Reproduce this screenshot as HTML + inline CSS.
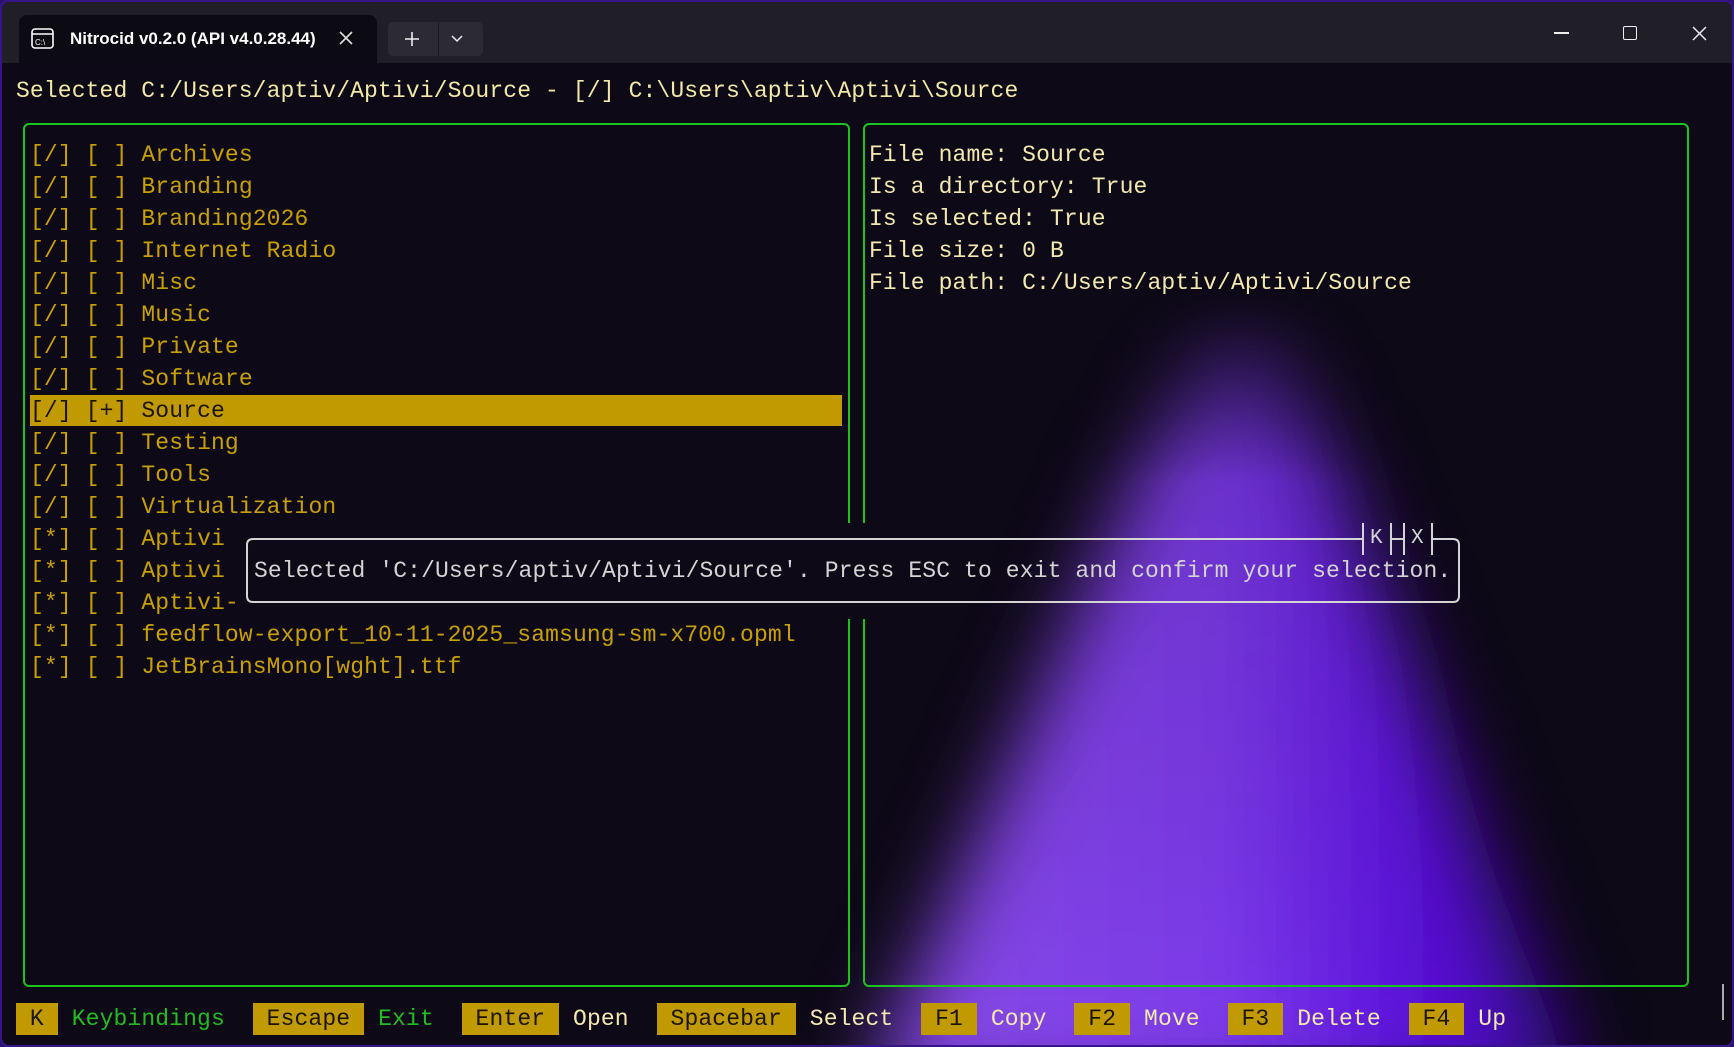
<!DOCTYPE html>
<html><head><meta charset="utf-8"><style>
*{margin:0;padding:0;box-sizing:border-box}
html,body{width:1734px;height:1047px;overflow:hidden;background:#2a1470}
#win{position:absolute;left:0;top:0;width:1734px;height:1047px;border-radius:9px;background:#0d0916;border:2px solid #35158a;overflow:hidden}
#tb{position:absolute;left:0;top:0;width:1734px;height:61px;background:#201e26}
.m{font-family:"Liberation Mono","DejaVu Sans Mono",monospace;font-size:23px;line-height:32px;white-space:pre;position:absolute;letter-spacing:0.12px}
.gold{color:#c8a000}
.pale{color:#f3e9b0}
.box{position:absolute;border:2px solid #1ec21e;border-radius:6px}
.k{background:#c09a00;color:#1a1400;display:inline-block;height:32px;line-height:32px}
.g{color:#22bb22}
</style></head><body>
<div id="win">
<svg style="position:absolute;left:0;top:0" width="1734" height="1047">
<defs>
<filter id="b" x="-50%" y="-50%" width="200%" height="200%"><feGaussianBlur stdDeviation="40"/></filter>
<linearGradient id="lg" x1="0" y1="0" x2="1" y2="0">
<stop offset="0" stop-color="#8a4de8"/><stop offset="0.5" stop-color="#7f3cee"/><stop offset="0.75" stop-color="#5e12e0"/><stop offset="1" stop-color="#3a0aa0"/></linearGradient>
<linearGradient id="vg" x1="0" y1="0" x2="0" y2="1"><stop offset="0" stop-color="#fff" stop-opacity="0"/><stop offset="0.25" stop-color="#fff" stop-opacity="0.85"/><stop offset="1" stop-color="#fff" stop-opacity="1"/></linearGradient>
<mask id="mk"><rect x="0" y="280" width="1734" height="800" fill="url(#vg)"/></mask>
</defs>
<g mask="url(#mk)"><polygon points="1215,290 1265,290 1580,1100 860,1100" fill="url(#lg)" filter="url(#b)"/></g>
</svg>
<div id="tb"></div>
<div style="position:absolute;left:17px;top:13px;width:358px;height:48px;background:#0c0a12;border-radius:8px 8px 0 0"></div>
<svg style="position:absolute;left:29px;top:26px" width="24" height="22"><rect x="1" y="1" width="21" height="19" rx="3" fill="none" stroke="#fff" stroke-width="1.6"/><line x1="1" y1="6" x2="22" y2="6" stroke="#fff" stroke-width="1.4"/><text x="4" y="17" font-family="Liberation Sans" font-size="8" fill="#fff">C:\</text></svg>
<div style="position:absolute;left:68px;top:27px;width:248px;overflow:hidden;white-space:nowrap;font:bold 17px 'Liberation Sans',sans-serif;color:#fff">Nitrocid v0.2.0 (API v4.0.28.44)</div>
<svg style="position:absolute;left:337px;top:29px" width="14" height="14"><path d="M1 1L13 13M13 1L1 13" stroke="#ddd" stroke-width="1.6"/></svg>
<div style="position:absolute;left:386px;top:20px;width:95px;height:34px;background:#2c2a33;border-radius:5px"></div>
<div style="position:absolute;left:436px;top:20px;width:1px;height:34px;background:#1a1820"></div>
<svg style="position:absolute;left:402px;top:29px" width="16" height="16"><path d="M8 1V15M1 8H15" stroke="#eee" stroke-width="1.6"/></svg>
<svg style="position:absolute;left:449px;top:33px" width="12" height="8"><path d="M1 1L6 6L11 1" stroke="#eee" stroke-width="1.5" fill="none"/></svg>
<div style="position:absolute;left:1552px;top:30px;width:15px;height:1.5px;background:#eee"></div>
<div style="position:absolute;left:1621px;top:24px;width:14px;height:14px;border:1.5px solid #eee;border-radius:2px"></div>
<svg style="position:absolute;left:1690px;top:24px" width="15" height="15"><path d="M1 1L14 14M14 1L1 14" stroke="#eee" stroke-width="1.5"/></svg>

<div class="m" style="left:14px;top:73px;color:#f2e8a8">Selected C:/Users/aptiv/Aptivi/Source - [/] C:\Users\aptiv\Aptivi\Source</div>

<div class="box" style="left:21px;top:121px;width:827px;height:864px"></div>
<div class="box" style="left:861px;top:121px;width:826px;height:864px"></div>
<div style="position:absolute;left:838px;top:521px;width:34px;height:96px;background:#0d0916"></div>

<div style="position:absolute;left:28px;top:393px;width:812px;height:31px;background:#c09a00"></div>
<div class="m gold" style="left:28px;top:137px">[/] [ ] Archives
[/] [ ] Branding
[/] [ ] Branding2026
[/] [ ] Internet Radio
[/] [ ] Misc
[/] [ ] Music
[/] [ ] Private
[/] [ ] Software
<span style="color:#1a1400">[/] [+] Source</span>
[/] [ ] Testing
[/] [ ] Tools
[/] [ ] Virtualization
[*] [ ] Aptivi
[*] [ ] Aptivi
[*] [ ] Aptivi-
[*] [ ] feedflow-export_10-11-2025_samsung-sm-x700.opml
[*] [ ] JetBrainsMono[wght].ttf</div>

<div class="m pale" style="left:867px;top:137px">File name: Source
Is a directory: True
Is selected: True
File size: 0 B
File path: C:/Users/aptiv/Aptivi/Source</div>

<svg style="position:absolute;left:0;top:0" width="1734" height="1047">
<g stroke="#d4d4d4" stroke-width="2" fill="none">
<path d="M1361 537H251Q245 537 245 543V594Q245 600 251 600H1451Q1457 600 1457 594V543Q1457 537 1451 537H1430"/>
<path d="M1389 537H1402"/>
<path d="M1361 521V553M1389 521V553M1402 521V553M1430 521V553"/>
</g>
</svg>
<div class="m" style="left:1368px;top:521px;font-size:21px;color:#d4d4d4">K</div>
<div class="m" style="left:1409px;top:521px;font-size:21px;color:#d4d4d4">X</div>
<div class="m" style="left:252px;top:553px;color:#d4d4d4">Selected 'C:/Users/aptiv/Aptivi/Source'. Press ESC to exit and confirm your selection.</div>

<div class="m" style="left:14px;top:1001px;height:32px;line-height:32px"><span class="k"> K </span> <span class="g">Keybindings</span>  <span class="k"> Escape </span> <span class="g">Exit</span>  <span class="k"> Enter </span> <span class="pale">Open</span>  <span class="k"> Spacebar </span> <span class="pale">Select</span>  <span class="k"> F1 </span> <span class="pale">Copy</span>  <span class="k"> F2 </span> <span class="pale">Move</span>  <span class="k"> F3 </span> <span class="pale">Delete</span>  <span class="k"> F4 </span> <span class="pale">Up</span></div>
<div style="position:absolute;left:1720px;top:982px;width:2px;height:36px;background:#aaa"></div>
</div>
</body></html>
